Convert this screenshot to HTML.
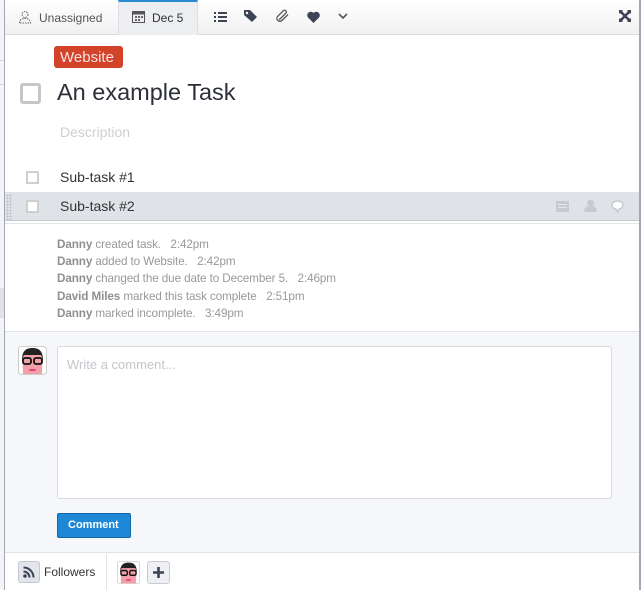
<!DOCTYPE html>
<html><head><meta charset="utf-8"><style>
*{margin:0;padding:0;box-sizing:border-box}
body{width:641px;height:590px;overflow:hidden;background:#fff;font-family:"Liberation Sans",sans-serif;position:relative}
.abs{position:absolute}
.t{position:absolute;white-space:nowrap}
</style></head><body>
<div class="abs" style="left:0;top:0;width:4px;height:590px;background:#f3f4f6"></div>
<div class="abs" style="left:0;top:60px;width:4px;height:1px;background:#d4d6dc"></div>
<div class="abs" style="left:0;top:84px;width:4px;height:1px;background:#d4d6dc"></div>
<div class="abs" style="left:0;top:288px;width:4px;height:30px;background:#dfe2e7"></div>
<div class="abs" style="left:4px;top:0;width:1px;height:590px;background:#a4a7b3"></div>
<div class="abs" style="left:639px;top:0;width:2px;height:590px;background:#a4a7b3"></div>
<div class="abs" style="left:5px;top:0;width:634px;height:35px;background:linear-gradient(#fff,#f1f1f2);border-bottom:1px solid #dcdcde"></div>
<div class="abs" style="left:118px;top:0;width:80px;height:35px;background:#eceef2;border-top:2px solid #2a8ad4;border-left:1px solid #e0e0e4;border-right:1px solid #e0e0e4"></div>
<svg class="abs" style="left:18px;top:10px" width="14" height="14" viewBox="0 0 14 14"><circle cx="7" cy="4.5" r="3" fill="none" stroke="#666" stroke-dasharray="1.5 1"/><path d="M1.5 13 C2 9 4.5 8.5 7 8.5 S12 9 12.5 13 Z" fill="none" stroke="#666" stroke-dasharray="1.5 1"/></svg>
<div class="t" style="left:39px;top:11px;font-size:12px;color:#555">Unassigned</div>
<svg class="abs" style="left:132px;top:10px" width="13" height="13" viewBox="0 0 13 13"><rect x="0.5" y="1.5" width="12" height="11" fill="none" stroke="#555"/><rect x="0.5" y="1.5" width="12" height="3" fill="#555"/><path d="M3 6h2v2H3zM6 6h2v2H6zM9 6h2v2H9zM3 9h2v2H3zM6 9h2v2H6z" fill="#666"/></svg>
<div class="t" style="left:152px;top:11px;font-size:12px;color:#333">Dec 5</div>
<svg class="abs" style="left:214px;top:12px" width="13" height="10"><path d="M0 0h2v2H0zM4 0h9v2H4zM0 4h2v2H0zM4 4h9v2H4zM0 8h2v2H0zM4 8h9v2H4z" fill="#3e4456"/></svg>
<svg class="abs" style="left:244px;top:10px" width="14" height="13" viewBox="0 0 14 13"><path d="M0 0h6l7 7-5 5-8-7z" fill="#3e4456"/><circle cx="3" cy="3" r="1.2" fill="#fff"/></svg>
<svg class="abs" style="left:276px;top:9px" width="14" height="14" viewBox="0 0 14 14"><path d="M3 11L10 4a1.8 1.8 0 0 0-2.5-2.5L1.5 7.5a3 3 0 0 0 4.2 4.2L12 5.5M4.5 9.5l5-5" fill="none" stroke="#555" stroke-width="1.3"/></svg>
<svg class="abs" style="left:307px;top:11px" width="13" height="12" viewBox="0 0 13 12"><path d="M6.5 12L1 6.5A3 3 0 0 1 6.5 2 3 3 0 0 1 12 6.5z" fill="#3e4456"/></svg>
<svg class="abs" style="left:338px;top:13px" width="10" height="7"><path d="M1 1l4 4 4-4" fill="none" stroke="#555" stroke-width="1.6"/></svg>
<svg class="abs" style="left:619px;top:10px" width="12" height="12" viewBox="0 0 12 12"><path d="M2 2l8 8M10 2l-8 8" stroke="#3e4456" stroke-width="2.6"/><rect x="0" y="0" width="3.5" height="3.5" fill="#3e4456"/><rect x="8.5" y="0" width="3.5" height="3.5" fill="#3e4456"/><rect x="0" y="8.5" width="3.5" height="3.5" fill="#3e4456"/><rect x="8.5" y="8.5" width="3.5" height="3.5" fill="#3e4456"/></svg>
<div class="abs" style="left:54px;top:46px;width:69px;height:22px;background:#d3432a;border-radius:3px"></div>
<div class="t" style="left:60px;top:48px;font-size:15px;line-height:19px;color:#f4e4e4">Website</div>
<div class="abs" style="left:20px;top:83px;width:21px;height:21px;border:3px solid #c6c6c6;border-radius:3px;background:#fff"></div>
<div class="t" style="left:57px;top:79px;font-size:23.5px;color:#2c2f38">An example Task</div>
<div class="t" style="left:60px;top:124px;font-size:14px;color:#cfcfd4">Description</div>
<div class="abs" style="left:26px;top:171px;width:13px;height:13px;border:2px solid #d0d0d0;background:#fff"></div>
<div class="t" style="left:60px;top:169px;font-size:14px;color:#333">Sub-task #1</div>
<div class="abs" style="left:5px;top:192px;width:634px;height:29px;background:#dfe3e8;border-bottom:1px solid #c8cbd1"></div>
<div class="abs" style="left:6px;top:194px;width:6px;height:26px;background-image:radial-gradient(#bfc2c8 40%,transparent 45%);background-size:3px 3px"></div>
<div class="abs" style="left:26px;top:200px;width:13px;height:13px;border:2px solid #cfcfcf;background:#fff"></div>
<div class="t" style="left:60px;top:198px;font-size:14px;color:#333">Sub-task #2</div>
<svg class="abs" style="left:556px;top:200px" width="13" height="12"><rect x="0" y="1" width="13" height="11" fill="#c7cbd1"/><rect x="2" y="4" width="9" height="1" fill="#e5e7ea"/><rect x="2" y="7" width="9" height="1" fill="#e5e7ea"/></svg>
<svg class="abs" style="left:584px;top:199px" width="13" height="13"><circle cx="6.5" cy="4" r="3.5" fill="#c7cbd1"/><path d="M0 13c0-5 3-6 6.5-6S13 8 13 13z" fill="#c7cbd1"/></svg>
<svg class="abs" style="left:611px;top:200px" width="13" height="13"><path d="M6.5 1C3 1 1 3 1 5s2 4 4 4l1.5 3 1.5-3c2 0 4-2 4-4S10 1 6.5 1z" fill="#fff" stroke="#c7cbd1" stroke-width="1.5"/></svg>
<div class="abs" style="left:5px;top:223px;width:634px;height:1px;background:#e4e6ea"></div>
<div style="position:absolute;left:57px;top:236px;font-size:11.7px;color:#999;line-height:17.2px;letter-spacing:-0.1px">
<div><b style="color:#8f8f8f">Danny</b> created task. &nbsp; 2:42pm</div>
<div><b style="color:#8f8f8f">Danny</b> added to Website. &nbsp; 2:42pm</div>
<div><b style="color:#8f8f8f">Danny</b> changed the due date to December 5. &nbsp; 2:46pm</div>
<div><b style="color:#8f8f8f">David Miles</b> marked this task complete &nbsp; 2:51pm</div>
<div><b style="color:#8f8f8f">Danny</b> marked incomplete. &nbsp; 3:49pm</div>
</div>
<div class="abs" style="left:5px;top:331px;width:634px;height:222px;background:#f5f7fa;border-top:1px solid #e1e3e7;border-bottom:1px solid #e1e3e7"></div>
<svg class="abs" style="left:18px;top:346px" width="29" height="29" viewBox="0 0 29 29"><rect x="0.5" y="0.5" width="28" height="28" rx="3" fill="#fff" stroke="#ccc"/><path d="M5 28c0-5-1-12 1-19h17c2 7 1 14 1 19z" fill="#f2a0a8"/><path d="M4 14c0-10 5-12 10.5-12S25 4 25 14l-2-5H6z" fill="#222"/><rect x="5" y="12" width="8" height="6" rx="2" fill="none" stroke="#111" stroke-width="1.8"/><rect x="16" y="12" width="8" height="6" rx="2" fill="none" stroke="#111" stroke-width="1.8"/><path d="M11.5 24h6" stroke="#e0407a" stroke-width="2"/></svg>
<div class="abs" style="left:57px;top:346px;width:555px;height:153px;background:#fff;border:1px solid #d8dade;border-radius:3px"></div>
<div class="t" style="left:67px;top:357px;font-size:13px;color:#c4c6cb">Write a comment...</div>
<div class="abs" style="left:57px;top:513px;width:74px;height:25px;background:#1e88d6;border:1px solid #1467a8;border-radius:2px"></div>
<div class="t" style="left:68px;top:519px;font-size:11px;font-weight:bold;color:#fff">Comment</div>
<div class="abs" style="left:18px;top:561px;width:22px;height:22px;background:#e2e5ea;border:1px solid #c5c8ce;border-radius:3px"></div>
<svg class="abs" style="left:23px;top:566px" width="12" height="12" viewBox="0 0 12 12"><circle cx="2" cy="10" r="1.8" fill="#3e4456"/><path d="M0.5 5.5a6 6 0 0 1 6 6M0.5 1.5a10 10 0 0 1 10 10" fill="none" stroke="#3e4456" stroke-width="2"/></svg>
<div class="t" style="left:44px;top:565px;font-size:12px;color:#333">Followers</div>
<div class="abs" style="left:106px;top:554px;width:1px;height:36px;background:#e1e3e7"></div>
<svg class="abs" style="left:117px;top:561px" width="23" height="23" viewBox="0 0 29 29"><rect x="0.5" y="0.5" width="28" height="28" rx="3" fill="#fff" stroke="#ccc"/><path d="M5 28c0-5-1-12 1-19h17c2 7 1 14 1 19z" fill="#f2a0a8"/><path d="M4 14c0-10 5-12 10.5-12S25 4 25 14l-2-5H6z" fill="#222"/><rect x="5" y="12" width="8" height="6" rx="2" fill="none" stroke="#111" stroke-width="1.8"/><rect x="16" y="12" width="8" height="6" rx="2" fill="none" stroke="#111" stroke-width="1.8"/><path d="M11.5 24h6" stroke="#e0407a" stroke-width="2"/></svg>
<div class="abs" style="left:147px;top:561px;width:23px;height:23px;background:#eef0f3;border:1px solid #c8cbd1;border-radius:3px"></div>
<svg class="abs" style="left:152px;top:566px" width="13" height="13"><path d="M6.5 1v11M1 6.5h11" stroke="#3e4456" stroke-width="2.6"/></svg>
</body></html>
